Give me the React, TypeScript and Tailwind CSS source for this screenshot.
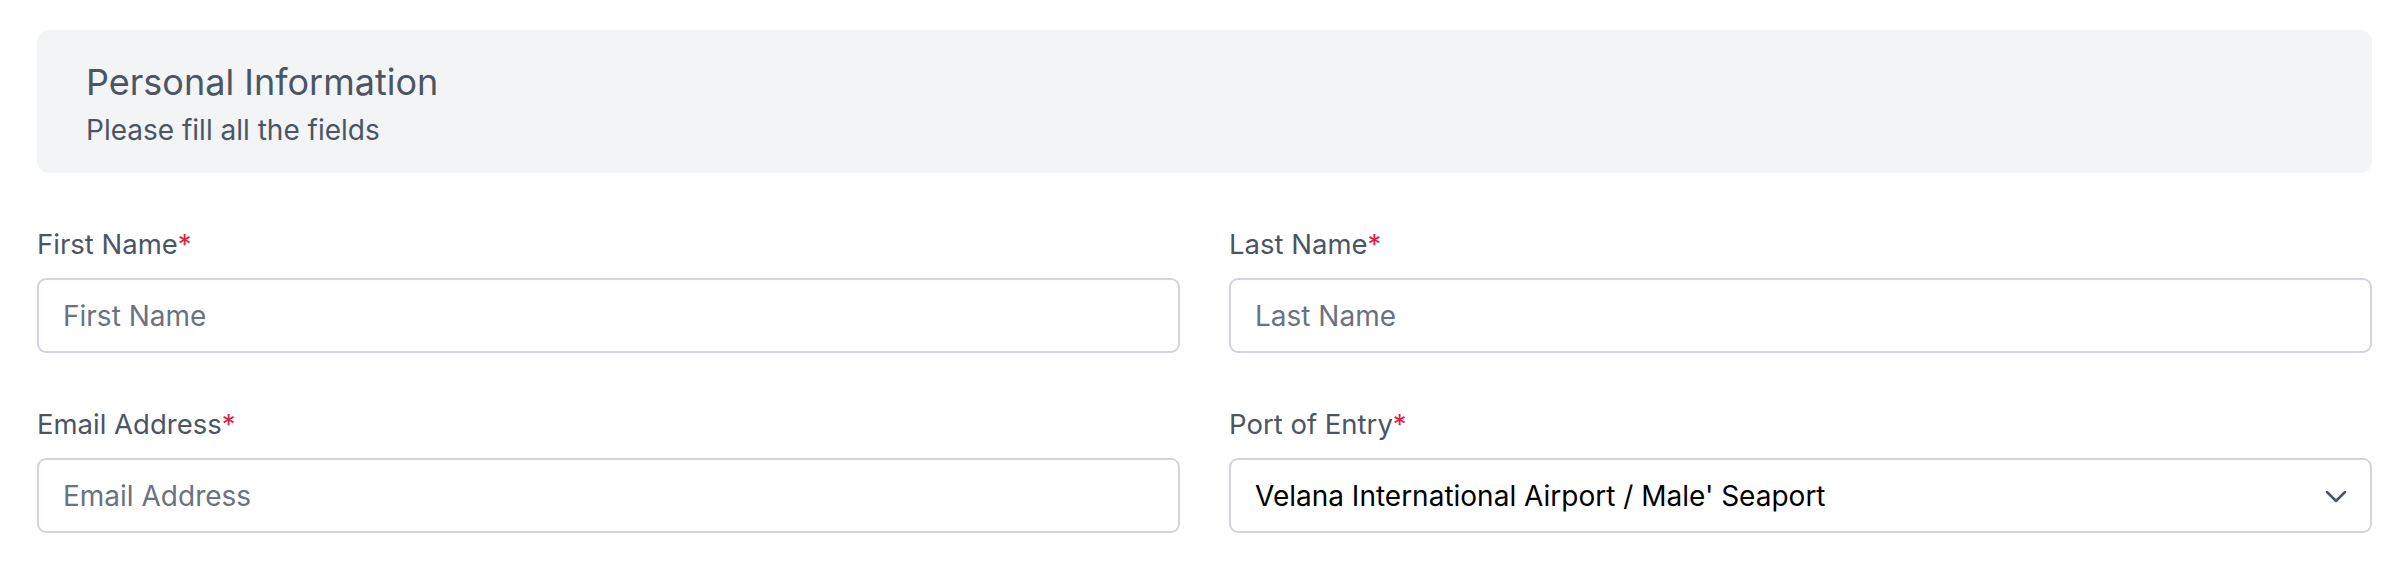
import React from "react";

const Field = ({ label, placeholder }: { label: string; placeholder: string }) => (
  <div className="flex flex-col">
    <label className="text-[27.5px] leading-[36px] text-[#4b5563]">
      {label}
      <span className="text-[#e11d48]">*</span>
    </label>
    <input
      placeholder={placeholder}
      className="mt-[16px] h-[75px] w-full rounded-[9px] border-2 border-[#d1d5db] bg-white px-[24px] text-[28px] text-black placeholder:text-[#6b7280] outline-none"
      style={{ fontFamily: "Inter, sans-serif" }}
    />
  </div>
);

export default function App() {
  return (
    <div className="min-h-[568px] bg-white pl-[37px] pr-[34px] pt-[30px]" style={{ fontFamily: "Inter, 'Noto Sans', sans-serif" }}>
      <div className="h-[143px] rounded-[12px] bg-[#f3f4f6] px-[49px] pt-[28px]">
        <h2 className="text-[36px] leading-[48px] text-[#4b5563]">Personal Information</h2>
        <p className="mt-[4px] text-[28px] leading-[40px] text-[#4b5563]">Please fill all the fields</p>
      </div>
      <div className="mt-[53px] grid grid-cols-2 gap-x-[49px] gap-y-[53px]">
        <Field label="First Name" placeholder="First Name" />
        <Field label="Last Name" placeholder="Last Name" />
        <Field label="Email Address" placeholder="Email Address" />
        <div className="flex flex-col">
          <label className="text-[27.5px] leading-[36px] text-[#4b5563]">
            Port of Entry<span className="text-[#e11d48]">*</span>
          </label>
          <div className="relative mt-[16px]">
            <select
              className="h-[75px] w-full appearance-none rounded-[9px] border-2 border-[#d1d5db] bg-white px-[24px] text-[28px] text-black outline-none"
              style={{ fontFamily: "Inter, sans-serif" }}
              defaultValue="vel"
            >
              <option value="vel">Velana International Airport / Male' Seaport</option>
            </select>
            <svg
              className="pointer-events-none absolute right-[24px] top-1/2 -translate-y-1/2"
              width="24"
              height="24"
              viewBox="0 0 24 24"
              fill="none"
              stroke="#4b5563"
              strokeWidth="2.5"
              strokeLinecap="round"
              strokeLinejoin="round"
            >
              <path d="M3 8l9 9 9-9" />
            </svg>
          </div>
        </div>
      </div>
    </div>
  );
}
